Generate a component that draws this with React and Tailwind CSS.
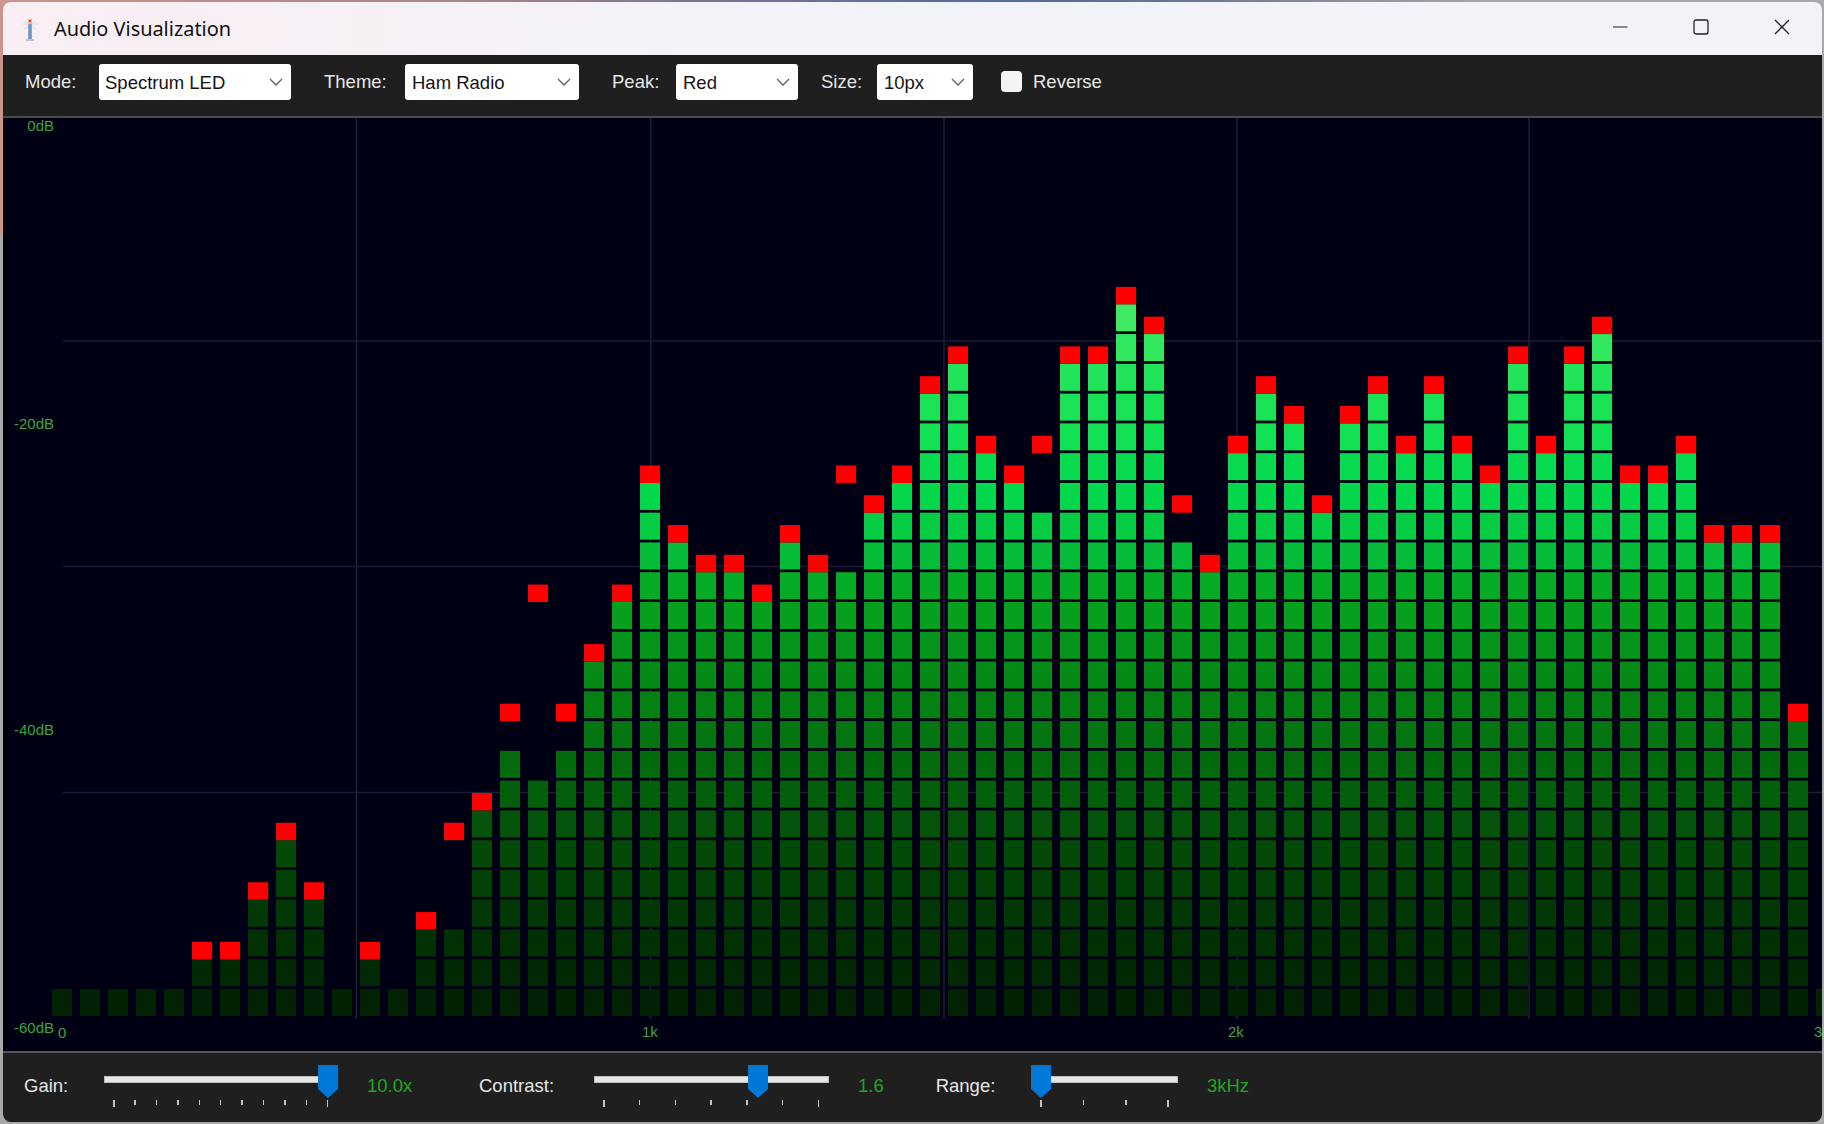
const LEVELS = [
  [1,0],[1,0],[1,0],[1,0],[1,0],[2,2],[2,2],[4,4],[6,6],[4,4],[1,0],[2,2],[1,0],[3,3],[3,6],[7,7],
  [9,10],[8,14],[9,10],[12,12],[14,14],[18,18],[16,16],[15,15],[15,15],[14,14],[16,16],[15,15],[15,18],[17,17],[18,18],
  [21,21],[22,22],[19,19],[18,18],[17,19],[22,22],[22,22],[24,24],[23,23],[16,17],[15,15],[19,19],[21,21],[20,20],[17,17],
  [20,20],[21,21],[19,19],[21,21],[19,19],[18,18],[22,22],[19,19],[22,22],[23,23],[18,18],[18,18],[19,19],[16,16],[16,16],[16,16],[10,10],[1,0],
];
const ROW_COLORS = ["#012303","#012a04","#023005","#023806","#024207","#034a08","#03540a","#045f0c","#046a0e","#047510","#058013","#058a16","#05951a","#069f1e","#06ab26","#06bc38","#06cc44","#05d74c","#08db50","#12e055","#1ae257","#22e45a","#30e75e","#40e962"];
const rowTop = (k) => 989 - (k - 1) * 29.77;
const V_LINES = [356.3, 650.6, 944, 1237, 1529];
const H_LINES = [341, 566.5, 792.5];

function Spectrum() {
  return (
    <svg width="1819" height="933" viewBox="3 118 1819 933" className="block">
      {H_LINES.map((y) => <line key={y} x1="63" x2="1822" y1={y} y2={y} stroke="#1d1e33" strokeWidth="1.5" />)}
      {V_LINES.map((x) => <line key={x} x1={x} x2={x} y1="118" y2="1019" stroke="#1d1e33" strokeWidth="1.5" />)}
      {LEVELS.map(([g, p], i) => {
        const x = 52 + i * 28;
        return (
          <g key={i}>
            {Array.from({ length: g }, (_, r) => (
              <rect key={r} x={x} y={rowTop(r + 1)} width="20" height="27" fill={ROW_COLORS[r]} />
            ))}
            {p > 0 && <rect x={x} y={rowTop(p) - 17.4} width="20" height="17.4" fill="#ff0000" />}
          </g>
        );
      })}
      <g fill="#3ca33f" fontSize="15" style={{ fontFamily: "'Liberation Sans', sans-serif" }}>
        <text x="54" y="131" textAnchor="end">0dB</text>
        <text x="54" y="429" textAnchor="end">-20dB</text>
        <text x="54" y="735" textAnchor="end">-40dB</text>
        <text x="54" y="1033" textAnchor="end">-60dB</text>
        <text x="58" y="1038">0</text>
        <text x="642" y="1037">1k</text>
        <text x="1228" y="1037">2k</text>
        <text x="1814" y="1037">3</text>
      </g>
    </svg>
  );
}

function Combo({ text, width, first }) {
  return (
    <div style={{ width }} className={(first ? "pl-[6px]" : "pl-[7px]") + " h-[36px] rounded-[3px] bg-white flex items-center justify-between pr-[8px] text-[18.5px] text-[#141414] shrink-0"}>
      <span className="whitespace-nowrap pt-[2px]">{text}</span>
      <svg width="14" height="8" viewBox="0 0 14 8" className="shrink-0">
        <polyline points="1,1 7,7 13,1" fill="none" stroke="#5f5f5f" strokeWidth="1.3" />
      </svg>
    </div>
  );
}

function Label({ children, width, ml = 0 }) {
  return (
    <div style={{ width, marginLeft: ml }} className="text-[18.5px] leading-[24px] text-[#e6e6e6] shrink-0 whitespace-nowrap">
      {children}
    </div>
  );
}

function Slider({ width, thumbLeft, ticks }) {
  return (
    <div style={{ width }} className="relative h-[42px] shrink-0">
      <div className="mt-[11px] h-[7px] bg-[#e6e6e6] border border-[#bdbdbd]" />
      <div className="mt-[17px] px-[9.5px] flex justify-between items-start">
        {Array.from({ length: ticks }, (_, i) => (
          <div key={i} className={i === 0 || i === ticks - 1 ? "w-[1.5px] h-[7px] bg-[#c4c4c4]" : "w-[1.5px] h-[5px] bg-[#c4c4c4]"} />
        ))}
      </div>
      <svg width="20" height="33" viewBox="0 0 20 33" className="absolute top-0" style={{ left: thumbLeft }}>
        <polygon points="0,0 20,0 20,24 10,33 0,24" fill="#0078d7" />
      </svg>
    </div>
  );
}

function Value({ children, ml, width }) {
  return (
    <div style={{ marginLeft: ml, width }} className="mt-[9px] text-[18.5px] leading-[24px] text-[#22a622] shrink-0 whitespace-nowrap">
      {children}
    </div>
  );
}

export default function App() {
  return (
    <div className="w-[1824px] h-[1124px] flex bg-[#a9a9a9] overflow-hidden [font-family:'Liberation_Sans',sans-serif]">
      <div className="w-[3px] shrink-0 flex flex-col">
        <div className="h-[236px] bg-[#c8968c]" />
        <div className="flex-1 bg-[#a9a9a9]" />
      </div>
      <div className="w-[1819px] shrink-0 flex flex-col bg-[linear-gradient(135deg,#c8968c_0%,#c8968c_3%,#a9a9a9_3%)]">
        <div className="h-[2px] bg-[linear-gradient(90deg,#c8968c_0%,#a98488_25%,#7a7590_38%,#566a98_55%,#6a7590_65%,#a8a8a8_82%)]" />
        <div className="h-[1120px] rounded-[8px] overflow-hidden flex flex-col">
          {/* Title bar */}
          <div className="h-[53px] flex items-center bg-[linear-gradient(90deg,#f9eef3_0%,#f2f3f9_48%)]">
            <svg width="24" height="26" viewBox="0 0 24 26" className="ml-[15px]">
              <path d="M4 8h16M6 5l12 8M18 5L6 13" stroke="#d5dfe8" strokeWidth="1" fill="none" />
              <rect x="10" y="3" width="4" height="5" fill="#eeb98a" />
              <rect x="11" y="4" width="2" height="2" fill="#d8452f" />
              <rect x="10.2" y="8" width="3.6" height="15" fill="#6c97c4" />
              <rect x="8" y="23" width="8" height="2" fill="#b9c8d8" />
            </svg>
            <span className="ml-[12px] text-[19.9px] text-[#111] [font-family:'Noto_Sans',sans-serif]">Audio Visualization</span>
            <div className="ml-auto flex items-center mr-[32px] gap-[65px] pb-[3px]">
              <svg width="16" height="16" viewBox="0 0 16 16">
                <line x1="1" x2="15.5" y1="8" y2="8" stroke="#222" strokeWidth="1.2" />
              </svg>
              <svg width="16" height="16" viewBox="0 0 16 16">
                <rect x="1" y="1" width="14" height="14" rx="2" fill="none" stroke="#222" strokeWidth="1.3" />
              </svg>
              <svg width="16" height="16" viewBox="0 0 16 16">
                <path d="M1 1l14 14M15 1L1 15" fill="none" stroke="#222" strokeWidth="1.3" />
              </svg>
            </div>
          </div>

          {/* Toolbar */}
          <div className="h-[61px] bg-[#1f1f1f] flex items-center pl-[22px] pb-[8px]">
            <Label width={74}>Mode:</Label>
            <Combo text="Spectrum LED" width={192} first />
            <Label width={81} ml={33}>Theme:</Label>
            <Combo text="Ham Radio" width={174} />
            <Label width={64} ml={33}>Peak:</Label>
            <Combo text="Red" width={122} />
            <Label width={56} ml={23}>Size:</Label>
            <Combo text="10px" width={96} />
            <div className="ml-[28px] w-[21px] h-[21px] rounded-[4px] bg-[#f4f4f4] shrink-0" />
            <Label ml={11}>Reverse</Label>
          </div>

          {/* Chart */}
          <div className="border-t-2 border-[#4a4a4a] bg-[#000014] h-[937px] border-b-2 border-b-[#555555]">
            <Spectrum />
          </div>

          {/* Controls */}
          <div className="flex-1 bg-[#1f1f1f] flex items-start pl-[21px] pt-[12px]">
            <div className="mt-[9px]"><Label width={79.5}>Gain:</Label></div>
            <Slider width={234.5} thumbLeft={214.5} ticks={11} />
            <Value ml={29} width={112}>10.0x</Value>
            <div className="mt-[9px]"><Label width={114.6}>Contrast:</Label></div>
            <Slider width={235} thumbLeft={154.2} ticks={7} />
            <Value ml={29.4} width={77.7}>1.6</Value>
            <div className="mt-[9px]"><Label width={95.3}>Range:</Label></div>
            <Slider width={147.5} thumbLeft={0} ticks={4} />
            <Value ml={28.5}>3kHz</Value>
          </div>
        </div>
      </div>
    </div>
  );
}
